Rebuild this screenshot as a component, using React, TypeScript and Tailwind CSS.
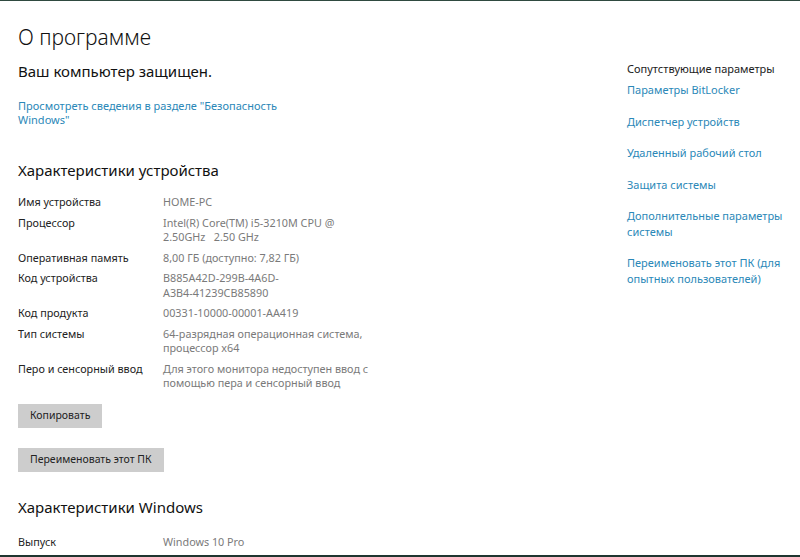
const specs: [string, string[]][] = [
  ['Имя устройства', ['HOME-PC']],
  ['Процессор', ['Intel(R) Core(TM) i5-3210M CPU @', '2.50GHz   2.50 GHz']],
  ['Оперативная память', ['8,00 ГБ (доступно: 7,82 ГБ)']],
  ['Код устройства', ['B885A42D-299B-4A6D-', 'A3B4-41239CB85890']],
  ['Код продукта', ['00331-10000-00001-AA419']],
  ['Тип системы', ['64-разрядная операционная система,', 'процессор x64']],
  ['Перо и сенсорный ввод', ['Для этого монитора недоступен ввод с', 'помощью пера и сенсорный ввод']],
]

const related = [
  ['Параметры BitLocker'],
  ['Диспетчер устройств'],
  ['Удаленный рабочий стол'],
  ['Защита системы'],
  ['Дополнительные параметры', 'системы'],
  ['Переименовать этот ПК (для', 'опытных пользователей)'],
]

function SpecRow({ label, lines }: { label: string; lines: string[] }) {
  return (
    <div className="flex text-[10.8px] leading-[14.3px]">
      <div className="w-[145px] shrink-0 text-[#222]">{label}</div>
      <div className="text-[#7a7a7a] whitespace-pre">
        {lines.map((l) => (
          <div key={l}>{l}</div>
        ))}
      </div>
    </div>
  )
}

function GrayButton({ children }: { children: string }) {
  return (
    <button className="h-6 bg-[#cdcdcd] px-3 text-[10.5px] text-[#222]">
      {children}
    </button>
  )
}

export default function App() {
  return (
    <div
      className="flex h-[557px] w-[800px] flex-col overflow-hidden bg-white"
      style={{ fontFamily: '"Noto Sans", "Open Sans", sans-serif' }}>
      <div className="h-px bg-[#2f4a40]" />
      <div className="flex flex-1 overflow-hidden">
        {/* main column */}
        <div className="w-[609px] shrink-0 pl-[18px] pt-[22px]">
          <h1 className="text-[21px] font-light leading-[28px] text-[#111]">
            О программе
          </h1>
          <p className="mt-[10px] text-[15px] leading-[20px] text-[#111]">
            Ваш компьютер защищен.
          </p>
          <a className="mt-[18px] block w-[280px] text-[11px] leading-[14px] text-[#2b88b8]">
            Просмотреть сведения в разделе "Безопасность Windows"
          </a>
          <h2 className="mt-[32px] text-[15px] leading-[22px] text-[#111]">
            Характеристики устройства
          </h2>
          <div className="mt-[14px] flex flex-col gap-[6.4px]">
            {specs.map(([label, lines]) => (
              <SpecRow key={label} label={label} lines={lines} />
            ))}
          </div>
          <div className="mt-[13px] flex flex-col items-start gap-5">
            <GrayButton>Копировать</GrayButton>
            <GrayButton>Переименовать этот ПК</GrayButton>
          </div>
          <h2 className="mt-[24px] text-[15px] leading-[22px] text-[#111]">
            Характеристики Windows
          </h2>
          <div className="mt-[17px]">
            <SpecRow label="Выпуск" lines={['Windows 10 Pro']} />
          </div>
        </div>
        {/* related settings */}
        <div className="flex-1 pt-[60px] pl-[18px]">
          <div className="text-[11px] leading-[15px] text-[#222]">
            Сопутствующие параметры
          </div>
          <div className="mt-[6px] flex flex-col gap-[16px]">
            {related.map((lines) => (
              <a key={lines[0]} className="block text-[11px] leading-[15.5px] text-[#2b88b8]">
                {lines.map((l) => (
                  <div key={l}>{l}</div>
                ))}
              </a>
            ))}
          </div>
        </div>
      </div>
      <div className="h-[2px] bg-[#1f3530]" />
    </div>
  )
}
